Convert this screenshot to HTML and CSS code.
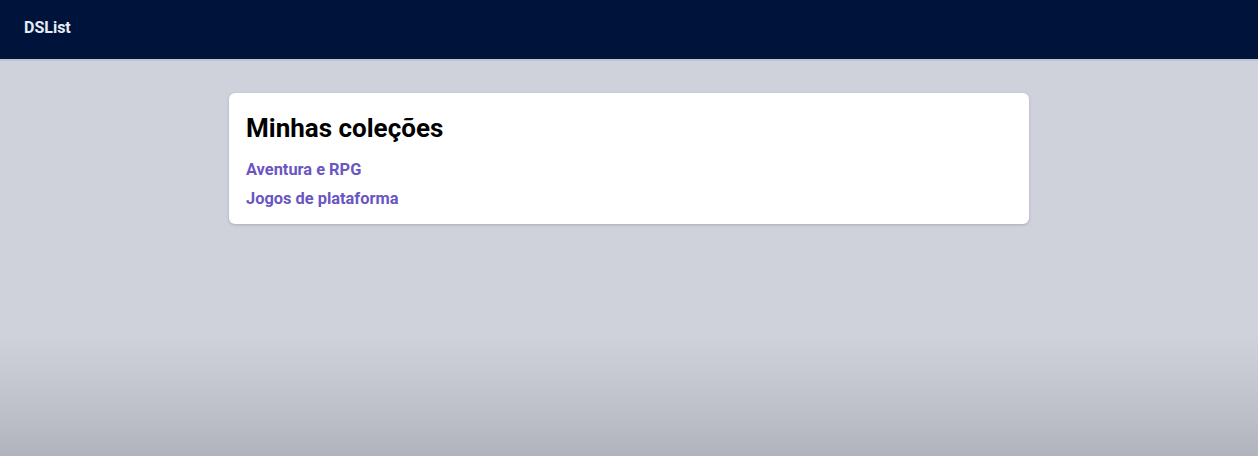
FILE: index.html
```html
<!DOCTYPE html>
<html lang="pt-BR">
<head>
<meta charset="utf-8">
<title>DSList</title>
<link rel="stylesheet" href="styles.css">
</head>
<body>
<header class="topbar">
  <div class="brand">DSList</div>
</header>
<main class="content">
  <section class="card">
    <h1 class="card-title">Minhas coleções</h1>
    <ul class="list">
      <li><a class="list-link" href="#">Aventura e RPG</a></li>
      <li><a class="list-link" href="#">Jogos de plataforma</a></li>
    </ul>
  </section>
</main>
</body>
</html>
```
FILE: styles.css
```css
* { box-sizing: border-box; }
html, body { margin: 0; padding: 0; }
body {
  min-height: 100vh;
  font-family: Roboto, "Liberation Sans", sans-serif;
  background: linear-gradient(to bottom, #cfd2db 0, #cfd2db 335px, #c3c6cf 390px, #b2b4bd 100%);
}
.topbar {
  height: 61px;
  background: #00143b;
  border-bottom: 2px solid #bcc6d6;
  display: flex;
  align-items: center;
  padding: 0 0 4px 24px;
}
.brand {
  color: #e8ecf4;
  font-weight: 700;
  font-size: 16px;
}
.content {
  display: flex;
  justify-content: center;
  padding-top: 32px;
}
.card {
  width: 800px;
  background: #ffffff;
  border-radius: 6px;
  box-shadow: 0 1px 3px rgba(60, 64, 80, 0.25);
  padding: 20px 17px 15px;
}
.card-title {
  margin: 0 0 17px;
  font-size: 26px;
  line-height: 30px;
  font-weight: 700;
  color: #000;
}
.list {
  list-style: none;
  margin: 0;
  padding: 0;
  display: flex;
  flex-direction: column;
  gap: 9px;
}
.list-link {
  color: #6a56c2;
  font-weight: 700;
  font-size: 16.4px;
  line-height: 20px;
  text-decoration: none;
}
```
